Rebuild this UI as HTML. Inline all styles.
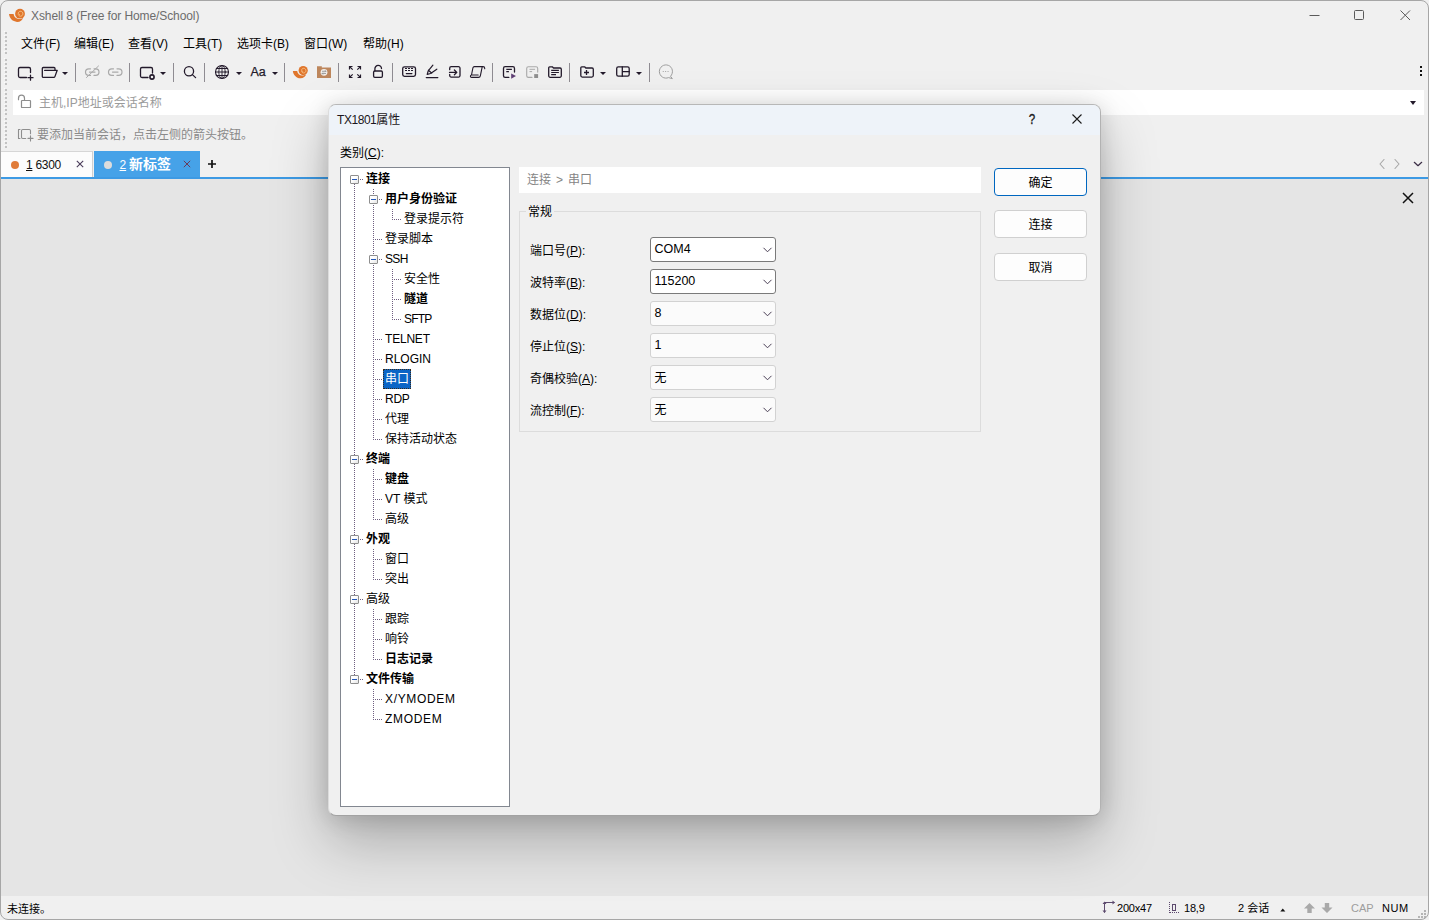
<!DOCTYPE html>
<html lang="zh-CN">
<head>
<meta charset="utf-8">
<title>Xshell 8 (Free for Home/School)</title>
<style>
html,body{margin:0;padding:0}
body{width:1429px;height:920px;overflow:hidden;position:relative;background:#f0f0f0;
 font-family:"Liberation Sans","Noto Sans CJK SC",sans-serif;font-size:12px;color:#000;line-height:16px}
.a{position:absolute;white-space:nowrap}
svg{position:absolute;overflow:visible}
.ic{fill:none;stroke:#231a2b;stroke-width:1.3;stroke-linecap:round;stroke-linejoin:round}
.icg{fill:none;stroke:#a9a9a9;stroke-width:1.2;stroke-linecap:round;stroke-linejoin:round}
.sep{position:absolute;top:63px;width:1px;height:19px;background:#8f8c92}
.dd{position:absolute;top:72px;width:0;height:0;border-left:3px solid transparent;border-right:3px solid transparent;border-top:3px solid #231a2b}
u{text-decoration:underline;text-underline-offset:1px}
/* window frame */
#frame{position:absolute;left:0;top:0;width:1427px;height:918px;border:1px solid #a6a6a6;border-radius:8px;pointer-events:none}
/* menu */
.menu{position:absolute;top:36px;height:16px;font-size:12px;color:#000}
/* dialog */
#dlg{position:absolute;left:328px;top:104px;width:771px;height:710px;background:#f0f0f0;border:1px solid;border-color:#b7b7b7 #b2b2b2 #a2a2a2 #dcdcdc;border-radius:8px;
 box-shadow:0 26px 56px rgba(0,0,0,.25),0 2px 22px rgba(0,0,0,.15);overflow:hidden}
#dlgt{position:absolute;left:0;top:0;width:100%;height:30px;background:#eef3f9}
.tree{position:absolute;width:168px;height:638px;border:1px solid #828790;background:#fff}
.ti{position:absolute;height:20px;line-height:20px;font-size:12px;white-space:nowrap;color:#000}
.ti.sel{background:#0b65c6;color:#fff;width:28px;box-sizing:border-box;text-align:center;outline:1px dotted #3a2a18;outline-offset:-1px}
.b{font-weight:bold}
i.v{position:absolute;width:1px;background:repeating-linear-gradient(#6f5f80 0 1px,transparent 1px 2px)}
i.h{position:absolute;height:1px;background:repeating-linear-gradient(90deg,#6f5f80 0 1px,transparent 1px 2px)}
i.ex{position:absolute;width:7px;height:7px;border:1px solid #8e8e8e;border-radius:1px;background:linear-gradient(135deg,#fff 40%,#e4e4e4)}
i.ex:after{content:"";position:absolute;left:1px;top:3px;width:5px;height:1px;background:#2458b8}
.lbl{position:absolute;font-size:12px;white-space:nowrap}
.cb{position:absolute;width:124px;height:23px;border:1px solid #7a7a7a;border-radius:3px;background:#fff}
.cb.l{border-color:#d2d2d2;background:#fbfbfb}
.cb span{position:absolute;left:3.500px;top:3px;font-size:12.500px}
.btn{position:absolute;width:91px;height:26px;border:1px solid #d0d0d0;border-radius:4px;background:#fdfdfd;text-align:center;line-height:28px;font-size:12px}
</style>
</head>
<body>
<!-- ===== main window chrome ===== -->
<svg style="left:6px;top:6px" width="22" height="18" viewBox="6 6 22 18">
<path d="M9 14.100h4.600c.3 2.700 2.500 4.700 5.300 4.900 1.700.1 3.200-.5 4.300-1.600-.6 2.700-3.200 4.600-6.200 4.500-4.300-.2-7.600-3.500-8-7.800z" fill="#e0762c"/>
<circle cx="20" cy="13.700" r="4.900" fill="#e0762c"/>
<path d="M18.300 14.800c.5 1.100 1.700 1.700 2.900 1.300 1.300-.4 2-1.800 1.600-3.100-.4-1.200-1.600-1.900-2.800-1.700-1 .2-1.700 1-1.700 2 0 .7.500 1.200 1.200 1.300" fill="none" stroke="#f7c489" stroke-width=".9" stroke-linecap="round"/>
</svg>
<div class="a" style="left:31px;top:8px;color:#6c6c6c;font-size:12px;letter-spacing:-.1px">Xshell 8 (Free for Home/School)</div>

<!-- MENUBAR -->
<div class="menu" style="left:21px">文件(F)</div>
<div class="menu" style="left:74px">编辑(E)</div>
<div class="menu" style="left:128px">查看(V)</div>
<div class="menu" style="left:183px">工具(T)</div>
<div class="menu" style="left:237px">选项卡(B)</div>
<div class="menu" style="left:304px">窗口(W)</div>
<div class="menu" style="left:363px">帮助(H)</div>
<!-- grip dots -->
<div class="a" style="left:5px;top:32px;width:2px;height:23px;background:repeating-linear-gradient(#c2c2c2 0 2px,transparent 2px 4px)"></div>
<div class="a" style="left:4px;top:31px;width:1px;height:23px;background:repeating-linear-gradient(#fbfbfb 0 1px,transparent 1px 4px)"></div>
<div class="a" style="left:5px;top:59px;width:2px;height:27px;background:repeating-linear-gradient(#c2c2c2 0 2px,transparent 2px 4px)"></div>
<div class="a" style="left:4px;top:58px;width:1px;height:27px;background:repeating-linear-gradient(#fbfbfb 0 1px,transparent 1px 4px)"></div>
<div class="a" style="left:5px;top:89px;width:2px;height:27px;background:repeating-linear-gradient(#c2c2c2 0 2px,transparent 2px 4px)"></div>
<div class="a" style="left:4px;top:88px;width:1px;height:27px;background:repeating-linear-gradient(#fbfbfb 0 1px,transparent 1px 4px)"></div>
<div class="a" style="left:5px;top:118px;width:2px;height:30px;background:repeating-linear-gradient(#c2c2c2 0 2px,transparent 2px 4px)"></div>
<div class="a" style="left:4px;top:117px;width:1px;height:30px;background:repeating-linear-gradient(#fbfbfb 0 1px,transparent 1px 4px)"></div>
<!-- window controls -->
<svg style="left:1300px;top:0" width="129" height="30" viewBox="0 0 129 30"><g fill="none" stroke="#5a5a5a" stroke-width="1">
<path d="M9.5 15.5h10"/><rect x="54.5" y="10.5" width="9" height="9" rx="1"/><path d="M100.5 10.5l9.5 9.5M110 10.5l-9.5 9.5"/></g></svg>
<!-- TOOLBAR -->
<svg style="left:0;top:56px" width="700" height="32" viewBox="0 56 700 32">
<g class="ic">
<!-- new session -->
<path d="M26.500 77.500h-6.500a1.500 1.500 0 0 1-1.500-1.500v-7a1.500 1.500 0 0 1 1.500-1.500h9a1.500 1.500 0 0 1 1.500 1.500v3.500"/><path d="M30.500 75.200v5M28 77.700h5"/>
<!-- open -->
<path d="M42.300 76.500v-8a1 1 0 0 1 1-1h10.700a1 1 0 0 1 1 1v1.800M44.600 70.300h12.600l-2.300 6.300a1.200 1.200 0 0 1-1.100.8h-10.500a1 1 0 0 1-1-1"/>
<!-- properties -->
<path d="M148 77.500h-6a1.500 1.500 0 0 1-1.500-1.500v-7a1.500 1.500 0 0 1 1.500-1.500h9a1.500 1.500 0 0 1 1.500 1.500v4"/><circle cx="152" cy="77" r="2.100" stroke-width="1.600"/>
<!-- search -->
<circle cx="189" cy="71.200" r="4.600"/><path d="M192.400 74.600l3.200 3"/>
<!-- globe -->
<g stroke-width="1.100"><circle cx="222" cy="72" r="6.500"/><ellipse cx="222" cy="72" rx="3.200" ry="6.500" stroke-width=".9"/><path d="M222 65.500v13" stroke-width=".9"/><path d="M215.500 72h13M216.400 68.500h11.200M216.400 75.500h11.200" stroke-width="1.100"/></g>
<!-- fullscreen -->
<path d="M349.500 69.500v-3h3M349.800 66.800l2.900 2.900M360.500 69.500v-3h-3M360.200 66.800l-2.900 2.900M349.500 74.500v3h3M349.800 77.200l2.900-2.900M360.500 74.500v3h-3M360.200 77.200l-2.900-2.900" stroke-width="1.200" stroke-linecap="butt" stroke-linejoin="miter"/>
<!-- lock -->
<rect x="373.600" y="71" width="8.800" height="6.300" rx="1.200"/><path d="M374.900 70.800v-2a3.300 3.300 0 0 1 6.600-.2"/>
<!-- keyboard -->
<rect x="402.700" y="66.800" width="12.800" height="9.600" rx="1.800"/><path d="M405 68.500h2M408 68.500h2M411 68.500h2M405 70.500h2M408 70.500h2M411 70.500h2" stroke-width="1" stroke-linecap="butt"/><path d="M406.300 73.600h5.600" stroke-width="1.200"/>
<!-- pen -->
<path d="M426.300 77.600h11.500"/><path d="M432.900 65.200l-4.700 5.600-1 3.500 3.400-.8 6.200-4.300M428.500 70.200l3.300 3" stroke-width="1.200"/>
<!-- import arrow -->
<path d="M449.700 69.700v-1.500a1.500 1.500 0 0 1 1.500-1.500h7.300a1.500 1.500 0 0 1 1.500 1.500v7.400a1.500 1.500 0 0 1-1.500 1.500h-7.300a1.500 1.500 0 0 1-1.500-1.500v-1.200"/><path d="M449.500 72.400h7M454.400 70l2.400 2.400-2.400 2.400"/>
<!-- scroll -->
<path d="M484.700 68.800v-.5a1.700 1.700 0 0 0-1.700-1.700h-8.600a1.600 1.600 0 0 0-1.500 1.200l-1.400 7.200M482.200 66.800l-1.800 8.900a2 2 0 0 1-2 1.700h-6.800a1.200 1.200 0 0 1 0-2.400h6.600" stroke-width="1.100"/>
<!-- script run -->
<path d="M508.800 77.400h-3.600a1.700 1.700 0 0 1-1.700-1.700v-7.300a1.700 1.700 0 0 1 1.700-1.700h7.600a1.700 1.700 0 0 1 1.700 1.700v3.700"/><path d="M506.300 69.300h5.600M506.300 71.600h2.600" stroke-width="1.200" stroke-linecap="butt"/>
<!-- script folder -->
<path d="M548.700 75.800v-8a1 1 0 0 1 1-1h2.600l1.200 1.200h6.600a1.200 1.200 0 0 1 1.200 1.200v6.600a1.500 1.500 0 0 1-1.500 1.500h-9.600a1.500 1.500 0 0 1-1.500-1.500z"/><path d="M551.200 70.400h7.700M551.200 72.500h7.700M551.200 74.600h4.800" stroke-width="1.100" stroke-linecap="butt"/>
<!-- add folder -->
<path d="M580.800 75.600v-7.800a1 1 0 0 1 1-1h2.800l1.200 1.200h6.300a1.200 1.200 0 0 1 1.200 1.200v6.400a1.500 1.500 0 0 1-1.500 1.500h-9.500a1.500 1.500 0 0 1-1.500-1.500z"/><path d="M586.500 70v5M584 72.500h5" stroke-width="1.300" stroke-linecap="butt"/>
<!-- layout -->
<rect x="616.700" y="66.800" width="12.500" height="9.400" rx="1.600"/><path d="M622.300 66.800v9.400M622.300 71.600h6.900"/>
</g>
<g class="icg">
<!-- unlink -->
<path d="M90.500 68.800h-1.700a3.300 3.300 0 0 0 0 6.600h1.700M94 68.800h1.700a3.300 3.300 0 0 1 0 6.600h-1.700M89.500 72.100h5.500" stroke-width="1.200"/><path d="M86.500 77.500l12-11.500" stroke-width="1"/>
<!-- link -->
<path d="M113.500 68.800h-1.700a3.300 3.300 0 0 0 0 6.600h1.700M117 68.800h1.700a3.300 3.300 0 0 1 0 6.600h-1.700M112.500 72.100h5.500" stroke-width="1.200"/>
<!-- script stop -->
<path d="M532 77.400h-3.600a1.700 1.700 0 0 1-1.700-1.700v-7.300a1.700 1.700 0 0 1 1.700-1.700h7.600a1.700 1.700 0 0 1 1.700 1.700v3.700" stroke-width="1.100"/><path d="M529.500 69.300h5.600M529.500 71.600h2.600" stroke-width="1" stroke-linecap="butt"/>
<!-- chat -->
<path d="M670.800 76a6.600 6.600 0 1 0-2.300 1.600l3.500.9z" stroke-width="1" stroke="#9e9e9e"/><path d="M663.200 71.500h.1M665.600 71.500h.1M668 71.500h.1" stroke-width="1.100" stroke="#9e9e9e"/>
</g>
<!-- run / stop glyphs -->
<path d="M511.200 73.400l4.800 2.700-4.800 2.700z" fill="#5f3f74"/>
<rect x="534.200" y="74.100" width="3.900" height="3.900" fill="#8f8f8f"/>
<!-- xshell logo -->
<g transform="translate(284.400 57.700) scale(.94)">
<path d="M9 14.100h4.600c.3 2.700 2.500 4.700 5.300 4.900 1.700.1 3.200-.5 4.300-1.600-.6 2.700-3.200 4.600-6.200 4.500-4.300-.2-7.600-3.500-8-7.800z" fill="#e0762c"/>
<circle cx="20" cy="13.700" r="4.900" fill="#e0762c"/>
<path d="M18.300 14.800c.5 1.100 1.700 1.700 2.900 1.300 1.300-.4 2-1.800 1.600-3.100-.4-1.200-1.600-1.900-2.800-1.700-1 .2-1.700 1-1.700 2 0 .7.500 1.200 1.200 1.300" fill="none" stroke="#f7c489" stroke-width=".9" stroke-linecap="round"/>
</g>
<!-- xftp logo -->
<g>
<path d="M317 66.200h4.800v1.200h9.200v10.600h-14z" fill="#bd865c"/>
<circle cx="324" cy="72.300" r="3.400" fill="#f3efeb"/>
<path d="M322 71.300h4M325 70.300l1 1-1 1M326 73.500h-4M323 72.500l-1 1 1 1" fill="none" stroke="#8d8d8d" stroke-width=".8"/>
</g>
<text x="250.500" y="76.300" font-family="Liberation Sans, sans-serif" font-size="12.500" fill="#231a2b" stroke="#231a2b" stroke-width=".25" letter-spacing="-.2">Aa</text>
</svg>
<div class="sep" style="left:75px"></div><div class="sep" style="left:129px"></div><div class="sep" style="left:173px"></div>
<div class="sep" style="left:204px"></div><div class="sep" style="left:284px"></div><div class="sep" style="left:338px"></div>
<div class="sep" style="left:392px"></div><div class="sep" style="left:492px"></div><div class="sep" style="left:569px"></div><div class="sep" style="left:649px"></div>
<div class="dd" style="left:62px"></div><div class="dd" style="left:160px"></div><div class="dd" style="left:236px"></div>
<div class="dd" style="left:272px"></div><div class="dd" style="left:600px"></div><div class="dd" style="left:636px"></div>
<div class="a" style="left:1420px;top:66px;width:2px;height:2px;background:#111;box-shadow:0 4px 0 #111,0 8px 0 #111"></div>
<!-- ADDRESS -->
<div class="a" style="left:13px;top:90px;width:1411px;height:25px;background:#fff"></div>
<svg style="left:16px;top:92px" width="18" height="18" viewBox="16 92 18 18"><g fill="none" stroke="#8e8e8e" stroke-width="1.200" stroke-linejoin="round" stroke-linecap="round"><rect x="21.500" y="100.500" width="9" height="7" rx=".6"/><path d="M18.500 99.700v-1.500a3 3 0 0 1 6 0v2"/></g></svg>
<div class="a" style="left:39px;top:95px;color:#9b9b9b;font-size:12px">主机,IP地址或会话名称</div>
<div class="a" style="left:1410px;top:100.500px;width:0;height:0;border-left:3.500px solid transparent;border-right:3.500px solid transparent;border-top:4px solid #231a2b"></div>
<!-- hint -->
<svg style="left:16px;top:126px" width="18" height="18" viewBox="16 126 18 18"><g fill="none" stroke="#8e8e8e" stroke-width="1.100" stroke-linecap="round" stroke-linejoin="round"><path d="M20 129.500h-1.500v9h1.500M25.700 138.500h-3a1.200 1.200 0 0 1-1.200-1.200v-6.600a1.200 1.200 0 0 1 1.200-1.200h6.600a1.200 1.200 0 0 1 1.200 1.200v3"/><path d="M30.500 135.900v5M28 138.400h5"/></g></svg>
<div class="a" style="left:37px;top:127px;color:#8a8a8a;font-size:12px">要添加当前会话，点击左侧的箭头按钮。</div>
<!-- TABS -->
<div class="a" style="left:1px;top:151px;width:92px;height:26px;background:#fcfcfc;border-top:1px solid #d6d6d6;border-right:1px solid #d0d0d0;box-sizing:border-box"></div>
<div class="a" style="left:11px;top:161px;width:8px;height:8px;border-radius:50%;background:#e07b39"></div>
<div class="a" style="left:26px;top:157px;font-size:12px;color:#111;letter-spacing:-.3px"><u>1</u> 6300</div>
<svg style="left:76px;top:160px" width="8" height="8" viewBox="0 0 8 8"><path d="M.800 .800l6.400 6.400M7.200 .800l-6.400 6.400" stroke="#4a3c5a" stroke-width="1.100" fill="none"/></svg>
<div class="a" style="left:94px;top:151px;width:106px;height:27px;background:#46a2e8"></div>
<div class="a" style="left:104px;top:161px;width:8px;height:8px;border-radius:50%;background:#dcdcdc"></div>
<div class="a" style="left:119.500px;top:157px;font-size:12px;color:#fff"><u>2</u></div>
<div class="a" style="left:129px;top:155px;font-size:14px;line-height:18px;color:#fff;font-weight:bold">新标签</div>
<svg style="left:183px;top:160px" width="8" height="8" viewBox="0 0 8 8"><path d="M.800 .800l6.400 6.400M7.200 .800l-6.400 6.400" stroke="#6a3a58" stroke-width="1" fill="none"/></svg>
<svg style="left:207px;top:159px" width="10" height="10" viewBox="0 0 10 10"><path d="M5 1v8M1 5h8" stroke="#111" stroke-width="1.700" fill="none"/></svg>
<div class="a" style="left:1px;top:177px;width:1427px;height:2px;background:#3d9ae4"></div>
<svg style="left:1376px;top:158px" width="50" height="12" viewBox="1376 158 50 12"><g fill="none" stroke-width="1.100" stroke-linecap="round" stroke-linejoin="round"><path d="M1384 159.500l-4 4.500 4 4.500M1395 159.500l4 4.500-4 4.500" stroke="#a6a6a6"/><path d="M1414.300 162.300l3.700 3.400 3.700-3.400" stroke="#3a2d45" stroke-width="1.200"/></g></svg>
<!-- MAIN -->
<div class="a" style="left:1px;top:179px;width:1427px;height:717px;background:#e5e5e5"></div>
<svg style="left:1402px;top:192px" width="12" height="12" viewBox="0 0 12 12"><path d="M1 1l10 10M11 1l-10 10" stroke="#111" stroke-width="1.500" fill="none"/></svg>
<!-- STATUS -->
<div class="a" style="left:1px;top:896px;width:1427px;height:23px;background:#f0f0f0"></div>
<div class="a" style="left:7px;top:901px;font-size:11px">未连接。</div>
<svg style="left:1100px;top:898px" width="330" height="20" viewBox="1100 898 330 20">
<g fill="none" stroke="#5d4a6e" stroke-width="1"><path d="M1104.500 902v10.500M1104.500 902.500h10"/></g>
<path d="M1102.500 904l2-2.500 2 2.500zM1102.500 910.500l2 2.500 2-2.500zM1112.500 900.500l2.500 2-2.500 2z" fill="#5d4a6e"/>
<g fill="none" stroke="#5d4a6e" stroke-width="1"><path d="M1169.500 902v11" stroke-dasharray="1 1"/><path d="M1170 912.500h10" stroke-dasharray="1 1"/><rect x="1172.500" y="904.500" width="3" height="6"/></g>
<path d="M1280.300 911.500l2.500-3 2.500 3z" fill="#111"/>
<path d="M1309.500 903l5.500 5.500h-3.300v4.500h-4.400v-4.500h-3.300z" fill="#a9a9a9"/>
<path d="M1327 913l5.500-5.500h-3.300v-4.500h-4.400v4.500h-3.300z" fill="#a9a9a9"/>
<g fill="#b4b4b4"><rect x="1424" y="910" width="2" height="2"/><rect x="1421" y="913" width="2" height="2"/><rect x="1424" y="913" width="2" height="2"/><rect x="1418" y="916" width="2" height="2"/><rect x="1421" y="916" width="2" height="2"/><rect x="1424" y="916" width="2" height="2"/></g>
</svg>
<div class="a" style="left:1117px;top:900px;font-size:11px;letter-spacing:-.2px">200x47</div>
<div class="a" style="left:1184px;top:900px;font-size:11px;letter-spacing:-.2px">18,9</div>
<div class="a" style="left:1238px;top:900px;font-size:11px">2 会话</div>
<div class="a" style="left:1351px;top:900px;font-size:11px;color:#9d9d9d">CAP</div>
<div class="a" style="left:1382px;top:900px;font-size:11px;letter-spacing:.6px">NUM</div>
<!-- DIALOG -->
<div id="dlg">
<div id="dlgt"></div>
<div class="a" style="left:8px;top:7px;font-size:12px;color:#1b1620"><span style="letter-spacing:-.45px">TX1801</span>属性</div>
<div class="a" style="left:699px;top:5px;width:8px;text-align:center;font-size:14.500px;line-height:18px;color:#1a1a1a;-webkit-text-stroke:.35px #1a1a1a;transform:scaleX(.8)">?</div>
<svg style="left:743px;top:9px" width="10" height="10" viewBox="0 0 10 10"><path d="M.500 .500l9 9M9.500 .500l-9 9" stroke="#1b1b1b" stroke-width="1.100" fill="none"/></svg>
<div class="a" style="left:11px;top:40px;font-size:12px">类别(<u>C</u>):</div>
<div class="tree" style="left:11px;top:62px">
<i class="v" style="left:13px;top:16px;height:491px"></i>
<i class="v" style="left:32px;top:21px;height:251px"></i>
<i class="v" style="left:51px;top:41px;height:11px"></i>
<i class="v" style="left:51px;top:101px;height:51px"></i>
<i class="v" style="left:32px;top:301px;height:51px"></i>
<i class="v" style="left:32px;top:381px;height:31px"></i>
<i class="v" style="left:32px;top:441px;height:51px"></i>
<i class="v" style="left:32px;top:521px;height:31px"></i>
<i class="h" style="left:19px;top:11px;width:3px"></i>
<i class="h" style="left:38px;top:31px;width:3px"></i>
<i class="h" style="left:53px;top:51px;width:7px"></i>
<i class="h" style="left:34px;top:71px;width:7px"></i>
<i class="h" style="left:38px;top:91px;width:3px"></i>
<i class="h" style="left:53px;top:111px;width:7px"></i>
<i class="h" style="left:53px;top:131px;width:7px"></i>
<i class="h" style="left:53px;top:151px;width:7px"></i>
<i class="h" style="left:34px;top:171px;width:7px"></i>
<i class="h" style="left:34px;top:191px;width:7px"></i>
<i class="h" style="left:34px;top:211px;width:7px"></i>
<i class="h" style="left:34px;top:231px;width:7px"></i>
<i class="h" style="left:34px;top:251px;width:7px"></i>
<i class="h" style="left:34px;top:271px;width:7px"></i>
<i class="h" style="left:19px;top:291px;width:3px"></i>
<i class="h" style="left:34px;top:311px;width:7px"></i>
<i class="h" style="left:34px;top:331px;width:7px"></i>
<i class="h" style="left:34px;top:351px;width:7px"></i>
<i class="h" style="left:19px;top:371px;width:3px"></i>
<i class="h" style="left:34px;top:391px;width:7px"></i>
<i class="h" style="left:34px;top:411px;width:7px"></i>
<i class="h" style="left:19px;top:431px;width:3px"></i>
<i class="h" style="left:34px;top:451px;width:7px"></i>
<i class="h" style="left:34px;top:471px;width:7px"></i>
<i class="h" style="left:34px;top:491px;width:7px"></i>
<i class="h" style="left:19px;top:511px;width:3px"></i>
<i class="h" style="left:34px;top:531px;width:7px"></i>
<i class="h" style="left:34px;top:551px;width:7px"></i>
<i class="ex" style="left:9px;top:7px"></i>
<div class="ti b" style="left:25px;top:1px">连接</div>
<i class="ex" style="left:28px;top:27px"></i>
<div class="ti b" style="left:44px;top:21px">用户身份验证</div>
<div class="ti" style="left:63px;top:41px">登录提示符</div>
<div class="ti" style="left:44px;top:61px">登录脚本</div>
<i class="ex" style="left:28px;top:87px"></i>
<div class="ti" style="left:44px;top:81px;letter-spacing:-0.63px">SSH</div>
<div class="ti" style="left:63px;top:101px">安全性</div>
<div class="ti b" style="left:63px;top:121px">隧道</div>
<div class="ti" style="left:63px;top:141px;letter-spacing:-0.82px">SFTP</div>
<div class="ti" style="left:44px;top:161px;letter-spacing:-0.2px">TELNET</div>
<div class="ti" style="left:44px;top:181px">RLOGIN</div>
<div class="ti sel" style="left:42px;top:201px">串口</div>
<div class="ti" style="left:44px;top:221px;letter-spacing:-0.27px">RDP</div>
<div class="ti" style="left:44px;top:241px">代理</div>
<div class="ti" style="left:44px;top:261px">保持活动状态</div>
<i class="ex" style="left:9px;top:287px"></i>
<div class="ti b" style="left:25px;top:281px">终端</div>
<div class="ti b" style="left:44px;top:301px">键盘</div>
<div class="ti" style="left:44px;top:321px">VT 模式</div>
<div class="ti" style="left:44px;top:341px">高级</div>
<i class="ex" style="left:9px;top:367px"></i>
<div class="ti b" style="left:25px;top:361px">外观</div>
<div class="ti" style="left:44px;top:381px">窗口</div>
<div class="ti" style="left:44px;top:401px">突出</div>
<i class="ex" style="left:9px;top:427px"></i>
<div class="ti" style="left:25px;top:421px">高级</div>
<div class="ti" style="left:44px;top:441px">跟踪</div>
<div class="ti" style="left:44px;top:461px">响铃</div>
<div class="ti b" style="left:44px;top:481px">日志记录</div>
<i class="ex" style="left:9px;top:507px"></i>
<div class="ti b" style="left:25px;top:501px">文件传输</div>
<div class="ti" style="left:44px;top:521px;letter-spacing:0.65px">X/YMODEM</div>
<div class="ti" style="left:44px;top:541px;letter-spacing:0.67px">ZMODEM</div>
</div>
<div class="a" style="left:190px;top:62px;width:462px;height:26px;background:#fff"></div>
<div class="a" style="left:198px;top:67px;font-size:12px;color:#858585">连接<span style="display:inline-block;width:17px;text-align:center">&gt;</span>串口</div>
<div class="a" style="left:190px;top:106px;width:460px;height:219px;border:1px solid #dcdcdc"></div>
<div class="a" style="left:197px;top:99px;padding:0 2px;background:#f0f0f0;font-size:12px">常规</div>
<div class="lbl" style="left:201px;top:138px">端口号(<u>P</u>):</div>
<div class="cb" style="left:321px;top:132px"><span>COM4</span><svg style="left:112px;top:9px" width="9" height="6" viewBox="0 0 9 6"><path d="M.500 .800l4 4 4-4" fill="none" stroke="#4a3f55" stroke-width="1"/></svg></div>
<div class="lbl" style="left:201px;top:170px">波特率(<u>B</u>):</div>
<div class="cb" style="left:321px;top:164px"><span>115200</span><svg style="left:112px;top:9px" width="9" height="6" viewBox="0 0 9 6"><path d="M.500 .800l4 4 4-4" fill="none" stroke="#4a3f55" stroke-width="1"/></svg></div>
<div class="lbl" style="left:201px;top:202px">数据位(<u>D</u>):</div>
<div class="cb l" style="left:321px;top:196px"><span>8</span><svg style="left:112px;top:9px" width="9" height="6" viewBox="0 0 9 6"><path d="M.500 .800l4 4 4-4" fill="none" stroke="#4a3f55" stroke-width="1"/></svg></div>
<div class="lbl" style="left:201px;top:234px">停止位(<u>S</u>):</div>
<div class="cb l" style="left:321px;top:228px"><span>1</span><svg style="left:112px;top:9px" width="9" height="6" viewBox="0 0 9 6"><path d="M.500 .800l4 4 4-4" fill="none" stroke="#4a3f55" stroke-width="1"/></svg></div>
<div class="lbl" style="left:201px;top:266px">奇偶校验(<u>A</u>):</div>
<div class="cb l" style="left:321px;top:260px"><span style="font-size:12px;top:4px">无</span><svg style="left:112px;top:9px" width="9" height="6" viewBox="0 0 9 6"><path d="M.500 .800l4 4 4-4" fill="none" stroke="#4a3f55" stroke-width="1"/></svg></div>
<div class="lbl" style="left:201px;top:298px">流控制(<u>F</u>):</div>
<div class="cb l" style="left:321px;top:292px"><span style="font-size:12px;top:4px">无</span><svg style="left:112px;top:9px" width="9" height="6" viewBox="0 0 9 6"><path d="M.500 .800l4 4 4-4" fill="none" stroke="#4a3f55" stroke-width="1"/></svg></div>
<div class="btn" style="left:665px;top:63px;border-color:#0067c0">确定</div>
<div class="btn" style="left:665px;top:105px">连接</div>
<div class="btn" style="left:665px;top:148px">取消</div>
</div>

<div id="frame"></div>
</body>
</html>
